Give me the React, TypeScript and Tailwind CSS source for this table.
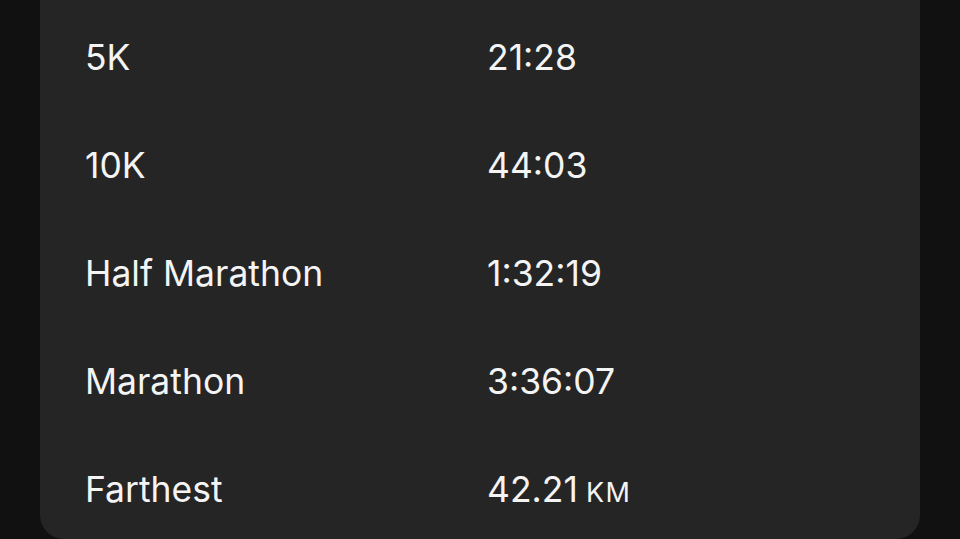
import React from "react";

const records = [
  { label: "5K", value: "21:28" },
  { label: "10K", value: "44:03" },
  { label: "Half Marathon", value: "1:32:19" },
  { label: "Marathon", value: "3:36:07" },
  { label: "Farthest", value: "42.21", unit: "KM" },
];

const App: React.FC = () => {
  return (
    <div className="h-[539px] w-[960px] overflow-hidden bg-[#111111] px-[40px] font-['Inter',sans-serif] text-[#f4f4f4]">
      <div className="h-[539px] rounded-b-[24px] bg-[#252525] pl-[45px] pt-[4px]">
        {records.map((r) => (
          <div key={r.label} className="flex h-[108px] items-center text-[35.5px]">
            <p className="w-[402px]">{r.label}</p>
            <p>
              {r.value}
              {r.unit && <span className="ml-[8px] text-[27px] tracking-[1.5px]">{r.unit}</span>}
            </p>
          </div>
        ))}
      </div>
    </div>
  );
};

export default App;
